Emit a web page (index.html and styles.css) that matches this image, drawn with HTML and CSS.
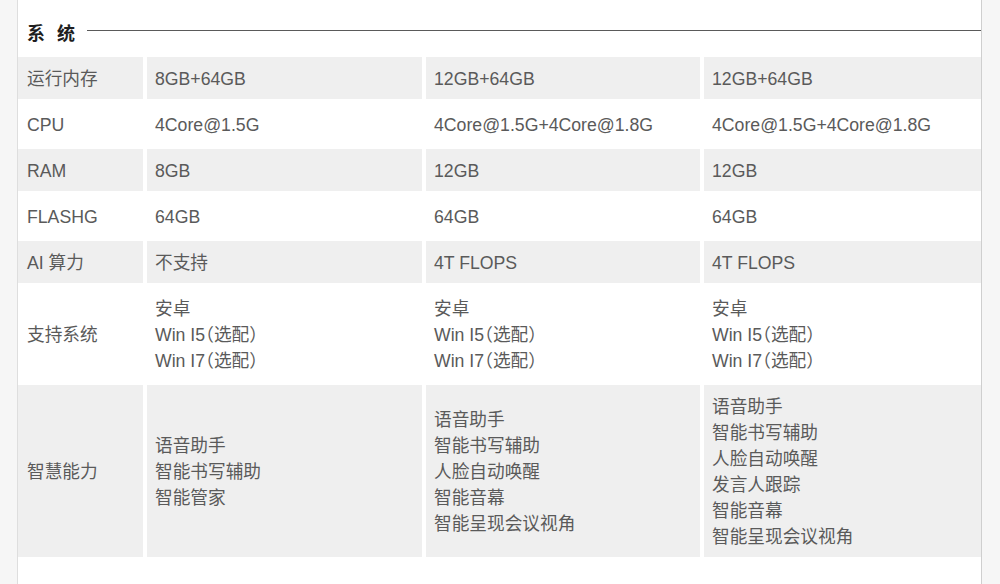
FILE: index.html
```html
<!DOCTYPE html>
<html lang="zh-CN">
<head>
<meta charset="utf-8">
<title>系统</title>
<link rel="stylesheet" href="styles.css">
</head>
<body>
<div class="panel">
  <div class="section-head">
    <h2 class="section-title">系统</h2>
    <div class="section-rule"></div>
  </div>
  <div class="spec">
    <div class="row shade">
      <div class="cell label">运行内存</div>
      <div class="cell">8GB+64GB</div>
      <div class="cell">12GB+64GB</div>
      <div class="cell">12GB+64GB</div>
    </div>
    <div class="row">
      <div class="cell label">CPU</div>
      <div class="cell">4Core@1.5G</div>
      <div class="cell">4Core@1.5G+4Core@1.8G</div>
      <div class="cell">4Core@1.5G+4Core@1.8G</div>
    </div>
    <div class="row shade">
      <div class="cell label">RAM</div>
      <div class="cell">8GB</div>
      <div class="cell">12GB</div>
      <div class="cell">12GB</div>
    </div>
    <div class="row">
      <div class="cell label">FLASHG</div>
      <div class="cell">64GB</div>
      <div class="cell">64GB</div>
      <div class="cell">64GB</div>
    </div>
    <div class="row shade">
      <div class="cell label">AI 算力</div>
      <div class="cell">不支持</div>
      <div class="cell">4T FLOPS</div>
      <div class="cell">4T FLOPS</div>
    </div>
    <div class="row">
      <div class="cell label">支持系统</div>
      <div class="cell"><span>安卓</span><span>Win I5（选配）</span><span>Win I7（选配）</span></div>
      <div class="cell"><span>安卓</span><span>Win I5（选配）</span><span>Win I7（选配）</span></div>
      <div class="cell"><span>安卓</span><span>Win I5（选配）</span><span>Win I7（选配）</span></div>
    </div>
    <div class="row shade">
      <div class="cell label">智慧能力</div>
      <div class="cell"><span>语音助手</span><span>智能书写辅助</span><span>智能管家</span></div>
      <div class="cell"><span>语音助手</span><span>智能书写辅助</span><span>人脸自动唤醒</span><span>智能音幕</span><span>智能呈现会议视角</span></div>
      <div class="cell"><span>语音助手</span><span>智能书写辅助</span><span>人脸自动唤醒</span><span>发言人跟踪</span><span>智能音幕</span><span>智能呈现会议视角</span></div>
    </div>
  </div>
</div>
</body>
</html>
```
FILE: styles.css
```css
html, body {
  margin: 0;
  padding: 0;
}
body {
  background: #f6f6f6;
  font-family: "Liberation Sans", "Noto Sans CJK SC", sans-serif;
  color: #555;
}
.panel {
  margin-left: 17px;
  width: 963px;
  min-height: 584px;
  background: #fff;
  border-left: 1px solid #dedede;
  border-right: 1px solid #cfcfcf;
  padding-top: 20px;
  box-sizing: content-box;
}
.section-head {
  display: flex;
  align-items: center;
  height: 24px;
  padding-left: 9px;
  margin-bottom: 13px;
}
.section-title {
  margin: 0;
  font-family: "Noto Sans CJK SC", sans-serif;
  font-size: 18px;
  font-weight: 700;
  line-height: 24px;
  letter-spacing: 12px;
  color: #1e1e1e;
}
.section-rule {
  flex: 1;
  height: 1px;
  background: #5a5a5a;
  margin-top: -3px;
}
.spec {
  display: flex;
  flex-direction: column;
  gap: 4px;
}
.row {
  display: grid;
  grid-template-columns: 125px 275px 274px 1fr;
  column-gap: 4px;
}
.cell {
  display: flex;
  flex-direction: column;
  justify-content: center;
  padding: 9px 8px 7px;
  font-size: 18px;
  font-size-adjust: 0.519;
  font-feature-settings: "halt";
  line-height: 26px;
  color: #5a5a5a;
  white-space: nowrap;
}
.cell.label {
  padding-left: 9px;
}
.row.shade .cell {
  background: #efefef;
}
```
